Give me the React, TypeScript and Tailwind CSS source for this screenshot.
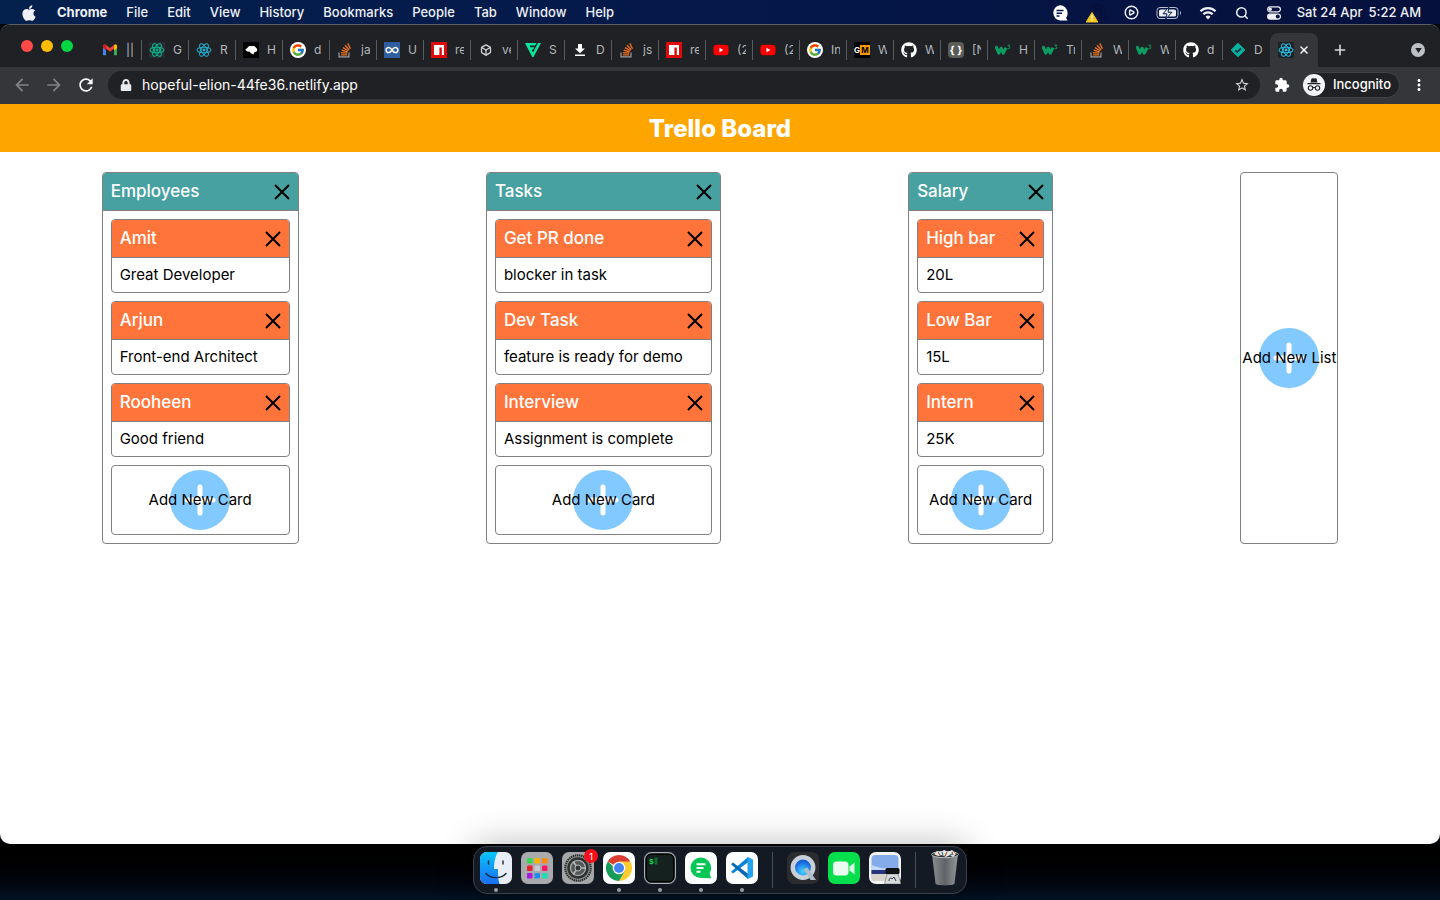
import type { ReactNode } from "react";
import { FaApple, FaGithub, FaLock, FaYoutube } from "react-icons/fa";
import { FcGoogle } from "react-icons/fc";
import { MdArrowBack, MdArrowForward, MdExtension, MdMoreVert, MdRefresh, MdStarBorder } from "react-icons/md";
import { Box, CirclePlay, Plus, Search, X } from "lucide-react";

/* ---------- favicons ---------- */

function Gmail() {
  return (
    <svg viewBox="0 0 16 16" className="size-4">
      <path d="M1 4v9.200h3V7z" fill="#4285f4" />
      <path d="M12 7v6.200h3V4z" fill="#34a853" />
      <path d="M12 4.400 15 3v3l-3 2.400z" fill="#fbbc04" />
      <path d="M1 4.200C1 2.600 2.800 2 4 3l4 3 4-3c1.200-1 3-.4 3 1.200L8 9.800z" fill="#ea4335" />
      <path d="M1 4.200C1 3 2 2.400 3 2.600L4 3.200v5L1 6z" fill="#c5221f" />
      <path d="m12 3.200 1-.6c1-.2 2 .4 2 1.600V6l-3 2.200z" fill="#fbbc04" />
    </svg>
  );
}

function ReactLogo({ color, tile }: { color: string; tile?: string }) {
  return (
    <svg viewBox="0 0 24 24" className="size-4">
      {tile && <rect width="24" height="24" rx="1.5" fill={tile} />}
      <g fill="none" stroke={color} strokeWidth="1.6">
        <ellipse cx="12" cy="12" rx="10.400" ry="4.200" />
        <ellipse cx="12" cy="12" rx="10.400" ry="4.200" transform="rotate(60 12 12)" />
        <ellipse cx="12" cy="12" rx="10.400" ry="4.200" transform="rotate(120 12 12)" />
      </g>
      <circle cx="12" cy="12" r="2.2" fill={color} />
    </svg>
  );
}

function Bird() {
  return (
    <svg viewBox="0 0 16 16" className="size-4">
      <rect width="16" height="16" fill="#000" />
      <path d="M2.300 7.400 5 5.200C5.600 4 7 3.600 8.200 4.200c2.400-.8 5 .4 6 3.200.4 1.400-.8 2.600-2.600 2.500-.6 1-1 1.700-1.200 2.600C8.600 12 7.200 11.200 6.600 9.600 4.800 9.800 3.200 9 2.300 7.400z" fill="#fff" />
    </svg>
  );
}

function GoogleDisc() {
  return (
    <span className="flex size-4 items-center justify-center rounded-full bg-white">
      <FcGoogle className="size-3.5" />
    </span>
  );
}

function Stack() {
  return (
    <svg viewBox="0 0 16 16" className="size-4" fill="none">
      <path d="M2 10.500v4.400h10v-4.400" stroke="#9aa0a6" strokeWidth="1.200" />
      <path d="M4 12.900h6.200M4.100 10.600l6.100.6M4.700 8.200l5.900 1.700M6 5.600l5.300 3.200M8 3.200l4.200 4.600M10.800 1.400l2.700 5.400" stroke="#f2711c" strokeWidth="1.300" />
    </svg>
  );
}

function Infinity8() {
  return (
    <svg viewBox="0 0 16 16" className="size-4" fill="none">
      <rect width="16" height="16" fill="#2f5f9f" />
      <path d="M8 8C7 6.400 6 5.400 4.700 5.400a2.600 2.600 0 0 0 0 5.200C6 10.600 7 9.600 8 8s2-2.600 3.300-2.600a2.600 2.600 0 0 1 0 5.200C10 10.600 9 9.600 8 8z" stroke="#fff" strokeWidth="1.500" />
    </svg>
  );
}

function Npm() {
  return (
    <svg viewBox="0 0 16 16" className="size-4">
      <rect width="16" height="16" fill="#e00a0a" />
      <path d="M3 3h10v10h-2.200V5.500H8.400V13H3z" fill="#fff" />
    </svg>
  );
}

function Flash() {
  return (
    <svg viewBox="0 0 16 16" className="size-4" fill="#0be49b">
      <path d="M0 1h11.600L10 3.600H4.600l.9 1.700h3.900L8 7.700H6.700L8 10.400 13 1h3L8.500 15H7.200z" />
    </svg>
  );
}

function DownloadGlyph() {
  return (
    <svg viewBox="0 0 16 16" className="size-4" fill="#fff">
      <path d="M6 2h4v4.500h3L8 11.300 3 6.500h3zM3 12.500h10V14H3z" />
    </svg>
  );
}

function YouTube() {
  return <FaYoutube className="size-4 text-[#ff0000] [background:linear-gradient(#fff,#fff)_center/6px_6px_no-repeat]" />;
}

function Gm() {
  return (
    <span className="flex size-4 items-center bg-black text-[8px] leading-none font-bold text-white">
      <span className="w-[6px]">G</span>
      <span className="flex h-2.5 w-2.5 items-center justify-center bg-[#ff9800] text-black">M</span>
    </span>
  );
}

function Braces() {
  return (
    <span className="flex size-4 items-center justify-center rounded-sm bg-[#5b5b58] text-[11px] leading-none font-bold text-white">
      {"{ }"}
    </span>
  );
}

function W3() {
  return (
    <svg viewBox="0 0 16 16" className="size-4" fill="none">
      <path d="M.8 4.200 3.800 11.200 6.200 6.200 8.200 11.200 11 5.800" stroke="#0a9e63" strokeWidth="3" strokeLinejoin="round" />
      <path d="M12.500 3.200h2.300l-1.100 1.400c1.600.2 1.400 2.200-.1 2.200-.6 0-1-.2-1.300-.6" stroke="#0a9e63" strokeWidth="1" />
    </svg>
  );
}

function Diamond() {
  return (
    <svg viewBox="0 0 16 16" className="size-4" fill="none">
      <path d="m8 1.200 6.800 6.800L8 14.800 1.200 8z" fill="#02b3a4" stroke="#02b3a4" strokeLinejoin="round" />
      <path d="m5.200 8 2.100 2.100L11 6.300" stroke="#10333a" strokeWidth="1.700" />
    </svg>
  );
}

const tabs: { icon: ReactNode; label: string }[] = [
  { icon: <Gmail />, label: "||" },
  { icon: <ReactLogo color="#09b58a" tile="#282c34" />, label: "G" },
  { icon: <ReactLogo color="#27a9c9" />, label: "R" },
  { icon: <Bird />, label: "H" },
  { icon: <GoogleDisc />, label: "d" },
  { icon: <Stack />, label: "ja" },
  { icon: <Infinity8 />, label: "U" },
  { icon: <Npm />, label: "re" },
  { icon: <Box className="size-3 text-[#d5d7da]" strokeWidth={2.500} />, label: "ve" },
  { icon: <Flash />, label: "S" },
  { icon: <DownloadGlyph />, label: "D" },
  { icon: <Stack />, label: "js" },
  { icon: <Npm />, label: "re" },
  { icon: <YouTube />, label: "(2" },
  { icon: <YouTube />, label: "(2" },
  { icon: <GoogleDisc />, label: "In" },
  { icon: <Gm />, label: "W" },
  { icon: <FaGithub className="size-4 text-white" />, label: "W" },
  { icon: <Braces />, label: "[N" },
  { icon: <W3 />, label: "H" },
  { icon: <W3 />, label: "Tr" },
  { icon: <Stack />, label: "W" },
  { icon: <W3 />, label: "W" },
  { icon: <FaGithub className="size-4 text-white" />, label: "d" },
  { icon: <Diamond />, label: "D" },
];

/* ---------- system menu bar ---------- */

const menus = ["File", "Edit", "View", "History", "Bookmarks", "People", "Tab", "Window", "Help"];

function MenuBar() {
  return (
    <header className="flex h-6 shrink-0 items-center justify-between bg-linear-to-r from-[#04204d] via-[#04184a] to-[#05103c] pt-px pr-[19px] pl-[20px] text-[13px] font-medium text-[#eef0f5]">
      <nav className="flex items-center gap-[19px]">
        <button aria-label="Apple menu"><FaApple className="size-[18px]" /></button>
        <button className="font-bold">Chrome</button>
        {menus.map((m) => (
          <button key={m}>{m}</button>
        ))}
      </nav>
      <div className="flex items-center">
        <svg viewBox="0 0 16 16" className="mr-[17px] size-4">
          <path d="M8 .3a7.600 7.600 0 0 1 7.600 7.600c0 2-.6 3.600-1.600 5l1.600 2.500H8A7.600 7.600 0 0 1 8 .3z" fill="#fff" />
          <path d="M4.500 5.500h7M4.500 8.200h5.500M4.500 11h3" stroke="#04184a" strokeWidth="1.500" />
        </svg>
        <svg viewBox="0 0 22 20" className="mr-[17px] h-5 w-[22px]">
          <path d="M6 13V9a7 7 0 0 1 14 0v7M10 15V9a3 3 0 0 1 6 0v8" fill="none" stroke="#06103a" strokeWidth="2" />
          <path d="m7 9.500 5.800 9.500H1.200z" fill="#f8c51c" stroke="#f8c51c" strokeLinejoin="round" />
          <path d="M7 12v3.500M7 16.500v1.300" stroke="#fff" strokeWidth="1.400" />
        </svg>
        <CirclePlay className="mr-[17px] size-[15px]" strokeWidth={2.300} />
        <svg viewBox="0 0 26 14" className="mr-[17px] h-[14px] w-[26px]" fill="none">
          <rect x="1" y="1.500" width="21" height="11" rx="3" stroke="#b9bfd0" />
          <rect x="3" y="3.500" width="17" height="7" rx="1.500" fill="#eef0f5" />
          <path d="M24 5v4c1.400-.6 1.400-3.400 0-4z" fill="#b9bfd0" />
          <path d="m13 .8-6 7h4l-1.300 5.400 6.300-7h-4z" fill="#eef0f5" stroke="#04184a" />
        </svg>
        <svg viewBox="0 0 18 14" className="mr-[18px] h-[14px] w-[18px]" fill="none" stroke="#eef0f5" strokeWidth="2.200">
          <path d="M1.500 5.300a10.600 10.600 0 0 1 15 0M4.300 8.300a6.600 6.600 0 0 1 9.400 0" />
          <path d="M9 13.500 6.500 10.800a3.600 3.600 0 0 1 5 0z" fill="#eef0f5" stroke="none" />
        </svg>
        <Search className="mr-[17px] size-[14px]" strokeWidth={2.600} />
        <svg viewBox="0 0 16 14" className="mr-[15px] h-[14px] w-4" fill="none">
          <rect x="1.600" y=".8" width="12.800" height="5" rx="2.500" stroke="#eef0f5" strokeWidth="1.200" />
          <circle cx="4.200" cy="3.300" r="1.700" fill="#eef0f5" />
          <rect x="1" y="7.500" width="14" height="6.200" rx="3.100" fill="#eef0f5" />
          <circle cx="11.800" cy="10.600" r="2" fill="#04123f" />
        </svg>
        <span className="flex gap-1.5">
          <span>Sat 24 Apr</span>
          <span>5:22 AM</span>
        </span>
      </div>
    </header>
  );
}

/* ---------- browser chrome ---------- */

function TabStrip() {
  return (
    <div className="flex h-[42px] items-end bg-[#202124]">
      <div className="flex h-[42px] w-[95px] shrink-0 items-center gap-2 pl-[21px]">
        <button aria-label="Close window" className="size-3 rounded-full bg-[#ff4a48]" />
        <button aria-label="Minimise" className="size-3 rounded-full bg-[#ffbd00]" />
        <button aria-label="Zoom" className="size-3 rounded-full bg-[#00d742]" />
      </div>
      <div className="flex h-[34px] items-center">
        {tabs.map((t, i) => (
          <button
            key={i}
            className={`flex h-5 w-[47px] items-center pl-[7px] ${i === tabs.length - 1 ? "" : "border-r border-[#5a5c60]"}`}
          >
            <span className="flex size-4 shrink-0 items-center justify-center">{t.icon}</span>
            <span className="ml-2 w-[9px] overflow-hidden text-left text-xs leading-4 whitespace-nowrap text-[#b4b7bb]">{t.label}</span>
          </button>
        ))}
        <div className="flex h-[34px] w-12 items-center gap-1 rounded-t-lg bg-[#35363a] pl-2">
          <ReactLogo color="#27b9dd" tile="#202124" />
          <button aria-label="Close tab" className="text-white"><X className="size-3" strokeWidth={3} /></button>
        </div>
      </div>
      <button aria-label="New tab" className="mb-[9px] ml-[14px] text-[#d5d7da]"><Plus className="size-4" strokeWidth={2.400} /></button>
      <button aria-label="Search tabs" className="mr-[15px] mb-[10px] ml-auto flex size-[14px] items-center justify-center rounded-full bg-[#bdc1c6]">
        <svg viewBox="0 0 8 6" className="h-[5px] w-[7px]"><path d="M0 0h8L4 6z" fill="#202124" /></svg>
      </button>
    </div>
  );
}

function Toolbar() {
  return (
    <div className="flex h-[37px] items-center bg-[#35363a] px-3 pb-[2px]">
      <button aria-label="Back" className="text-[#828387]"><MdArrowBack className="size-5" /></button>
      <button aria-label="Forward" className="ml-3 text-[#828387]"><MdArrowForward className="size-5" /></button>
      <button aria-label="Reload" className="ml-3 text-white"><MdRefresh className="size-5" /></button>
      <div className="ml-3 flex h-7 flex-1 items-center rounded-full bg-[#202124] pr-[10px] pl-3">
        <FaLock className="size-3 text-[#e8eaed]" />
        <input
          aria-label="Address"
          defaultValue="hopeful-elion-44fe36.netlify.app"
          className="ml-[10px] flex-1 bg-transparent text-sm text-white outline-none"
        />
        <button aria-label="Bookmark" className="text-[#d5d7da]"><MdStarBorder className="size-4" /></button>
      </div>
      <button aria-label="Extensions" className="ml-[14px] text-white"><MdExtension className="size-4" /></button>
      <button className="ml-3 flex h-[26px] items-center gap-2 rounded-full border border-[#414246] bg-[#202124] pr-2 text-[13px] font-medium text-white">
        <svg viewBox="0 0 22 22" className="size-[22px]">
          <circle cx="11" cy="11" r="11" fill="#f4f5f6" />
          <path d="M7.500 8.500 8.300 5c.2-.8.8-1 1.400-.8l1.300.3 1.300-.3c.6-.2 1.200 0 1.400.8l.8 3.500zM4.500 9h13v1.200h-13z" fill="#202124" />
          <g fill="none" stroke="#202124" strokeWidth="1.100">
            <circle cx="7.500" cy="14" r="2.200" />
            <circle cx="14.500" cy="14" r="2.200" />
            <path d="M9.700 13.800c.8-.5 1.800-.5 2.600 0" />
          </g>
        </svg>
        Incognito
      </button>
      <button aria-label="More" className="ml-[10px] text-white"><MdMoreVert className="size-[18px]" /></button>
    </div>
  );
}

/* ---------- board ---------- */

interface List {
  title: string;
  width: string;
  cards: { title: string; body: string }[];
}

const lists: List[] = [
  {
    title: "Employees",
    width: "w-[197px]",
    cards: [
      { title: "Amit", body: "Great Developer" },
      { title: "Arjun", body: "Front-end Architect" },
      { title: "Rooheen", body: "Good friend" },
    ],
  },
  {
    title: "Tasks",
    width: "w-[235px]",
    cards: [
      { title: "Get PR done", body: "blocker in task" },
      { title: "Dev Task", body: "feature is ready for demo" },
      { title: "Interview", body: "Assignment is complete" },
    ],
  },
  {
    title: "Salary",
    width: "w-[145px]",
    cards: [
      { title: "High bar", body: "20L" },
      { title: "Low Bar", body: "15L" },
      { title: "Intern", body: "25K" },
    ],
  },
];

function TitleRow({ title, tone }: { title: string; tone: string }) {
  return (
    <div className={`flex h-[38px] items-center justify-between border-b border-[#808080] px-2 text-[17px] font-medium text-white ${tone}`}>
      <h2 className="whitespace-nowrap">{title}</h2>
      <button aria-label={`Remove ${title}`}>
        <svg viewBox="0 0 16 16" className="size-4" stroke="#000" strokeWidth="2"><path d="m1 1 14 14M15 1 1 15" /></svg>
      </button>
    </div>
  );
}

function AddButton({ label, className }: { label: string; className: string }) {
  return (
    <button className={`grid place-items-center rounded border border-[#808080] ${className}`}>
      <svg viewBox="0 0 60 60" className="col-start-1 row-start-1 size-[60px]">
        <circle cx="30" cy="30" r="30" fill="#82c9ff" />
        <path d="M30 17v26M17 30h26" stroke="#fff" strokeWidth="5" strokeLinecap="round" />
      </svg>
      <span className="col-start-1 row-start-1 whitespace-nowrap">{label}</span>
    </button>
  );
}

function Board() {
  return (
    <main className="flex-1 bg-white text-[15px] text-black">
      <h1 className="flex h-12 items-center justify-center bg-[#ffa500] pt-[2px] text-2xl font-extrabold text-white">Trello Board</h1>
      <div className="flex justify-around px-2 pt-5">
        {lists.map((l) => (
          <section key={l.title} className={`overflow-hidden rounded border border-[#808080] ${l.width}`}>
            <TitleRow title={l.title} tone="bg-[#47a1a1]" />
            <div className="flex flex-col gap-2 p-2">
              {l.cards.map((c) => (
                <article key={c.title} className="overflow-hidden rounded border border-[#808080]">
                  <TitleRow title={c.title} tone="bg-[#ff743b]" />
                  <p className="flex h-[34px] items-center px-2 whitespace-nowrap">{c.body}</p>
                </article>
              ))}
              <AddButton label="Add New Card" className="h-[70px]" />
            </div>
          </section>
        ))}
        <AddButton label="Add New List" className="w-[98px] grid-cols-[96px]" />
      </div>
    </main>
  );
}

/* ---------- dock ---------- */

function Finder() {
  return (
    <svg viewBox="0 0 32 32" className="size-8">
      <defs>
        <linearGradient id="finder" x2="0" y2="1"><stop stopColor="#08c5fb" /><stop offset="1" stopColor="#1a6df2" /></linearGradient>
        <clipPath id="finderClip"><rect width="32" height="32" rx="7" /></clipPath>
      </defs>
      <g clipPath="url(#finderClip)">
        <rect width="32" height="32" fill="#e9eef6" />
        <path d="M0 0h18c-3 5-4 10-4 17h4c0 6 0 10 1.500 15H0z" fill="url(#finder)" />
      </g>
      <path d="M8.500 9v3M23 9v3M6 21.500c5 5.500 15 5.500 20 0" fill="none" stroke="#16283c" strokeWidth="1.400" strokeLinecap="round" />
    </svg>
  );
}

const padColors = ["#35d84f", "#ffb400", "#ff8a10", "#e8202e", "#c9ccd2", "#fb1568", "#a819e0", "#1d8df4", "#1ce0b2"];

function Launchpad() {
  return (
    <svg viewBox="0 0 32 32" className="size-8">
      <rect width="32" height="32" rx="7" fill="#a9aaad" />
      {padColors.map((c, i) => (
        <rect key={c} x={6 + (i % 3) * 7.500} y={6 + Math.floor(i / 3) * 7.500} width="5.500" height="5.500" rx="1.300" fill={c} />
      ))}
    </svg>
  );
}

function Settings() {
  return (
    <svg viewBox="0 0 32 32" className="size-8" fill="none">
      <rect width="32" height="32" rx="7" fill="#a4a7a5" />
      <circle cx="16" cy="16" r="12.800" fill="#8a8d8c" stroke="#2a2c2d" strokeWidth="2" strokeDasharray="1.400 .7" />
      <circle cx="16" cy="16" r="9.500" fill="#555858" stroke="#2e3031" strokeWidth="2.500" />
      <circle cx="16" cy="16" r="7.500" stroke="#aeb1b0" strokeWidth="1.200" />
      <path d="m16 16-5-6.500M16 16h8M16 16l-5 6.500" stroke="#b6b9b8" strokeWidth="1.600" />
      <circle cx="16" cy="16" r="3" fill="#333536" stroke="#b6b9b8" />
    </svg>
  );
}

function ChromeIcon() {
  return (
    <svg viewBox="0 0 32 32" className="size-8">
      <rect width="32" height="32" rx="7" fill="#fff" />
      <path d="M16 16 4.740 9.500A13 13 0 0 1 27.260 9.500z" fill="#dc3d31" />
      <path d="M27.260 9.500A13 13 0 0 1 16 29l5.200-10L16 9.500z" fill="#fdcb2e" />
      <path d="M4.740 9.500A13 13 0 0 0 16 29l5.600-9.700H16z" fill="#179b58" />
      <circle cx="16" cy="16" r="6.300" fill="#fff" />
      <circle cx="16" cy="16" r="5" fill="#4583f3" />
    </svg>
  );
}

function Terminal() {
  return (
    <svg viewBox="0 0 32 32" className="size-8">
      <rect x=".6" y=".6" width="30.800" height="30.800" rx="7" fill="#000" stroke="#a7b3b8" strokeWidth="1.200" />
      <rect x="3" y="3" width="26" height="26" rx="4" fill="#14211f" />
      <text x="5" y="12" fontSize="8" fontFamily="Liberation Mono, monospace" fontWeight="700" fill="#18d34b">$</text>
      <rect x="10.500" y="5.500" width="3" height="7" fill="#0b6d2a" />
    </svg>
  );
}

function Chat() {
  return (
    <svg viewBox="0 0 32 32" className="size-8">
      <rect width="32" height="32" rx="7" fill="#fff" />
      <path d="M15.800 5.500a10.300 10.300 0 0 1 10.300 10.300c0 2.600-.7 4.300-1.600 5.900l1.800 4.600-10.500-.2a10.300 10.300 0 0 1 0-20.600z" fill="#06c755" />
      <path d="M11.500 12.300h9M11.500 16h7M11.500 19.700h4" stroke="#fff" strokeWidth="2" />
    </svg>
  );
}

function Code() {
  return (
    <svg viewBox="0 0 32 32" className="size-8">
      <rect width="32" height="32" rx="7" fill="#fff" />
      <path d="M5 19.800 7 21.500 22 10.200V5z" fill="#0a84d8" />
      <path d="m5 12.200 17 14.800v-5.200L7 10.500z" fill="#0869b3" />
      <path d="m21.500 4.800 5.500 2.600v17.200l-5.500 2.600z" fill="#22a3f1" />
    </svg>
  );
}

function QuickTime() {
  return (
    <svg viewBox="0 0 32 32" className="size-8">
      <defs>
        <radialGradient id="qt" cy=".7"><stop stopColor="#42d7ff" /><stop offset="1" stopColor="#1560dc" /></radialGradient>
      </defs>
      <rect width="32" height="32" rx="7" fill="#2a2c30" />
      <circle cx="16" cy="15.500" r="10.200" fill="url(#qt)" stroke="#c7d0d9" strokeWidth="4.500" />
      <path d="m16.500 17 4-1.500 8.500 12.500h-5.500z" fill="#aebdc8" />
    </svg>
  );
}

function FaceTime() {
  return (
    <svg viewBox="0 0 32 32" className="size-8">
      <rect width="32" height="32" rx="7" fill="#06df4c" />
      <rect x="5" y="9.500" width="15.500" height="14" rx="3.500" fill="#e9fbef" />
      <path d="m21.500 14.500 5-4v12l-5-4z" fill="#d9f7e2" />
    </svg>
  );
}

function Preview() {
  return (
    <svg viewBox="0 0 32 32" className="size-8">
      <rect width="32" height="32" rx="7" fill="#f4f4f4" />
      <rect x="2.500" y="3" width="27" height="26" rx="4" fill="#84abea" />
      <path d="M2.500 13 12 16l17.500 1v3h-27z" fill="#c3d8f7" />
      <path d="M2.500 18h27v4h-27z" fill="#27357c" />
      <path d="M2.500 22h27v4a3 3 0 0 1-3 3h-21a3 3 0 0 1-3-3z" fill="#d9d4cb" />
      <path d="M18 22h11l3 10H15.500z" fill="#d7dadd" stroke="#717579" strokeWidth=".6" />
      <rect x="16.500" y="16" width="14" height="6" rx="1.500" fill="#101214" />
      <path d="M20 29c0-3 2-4 3-2l2-2 2 4" fill="none" stroke="#33373a" />
    </svg>
  );
}

function Trash() {
  return (
    <svg viewBox="0 0 30 38" className="h-[38px] w-[30px]">
      <defs>
        <linearGradient id="can"><stop stopColor="#898d8f" /><stop offset=".5" stopColor="#606466" /><stop offset="1" stopColor="#939799" /></linearGradient>
      </defs>
      <path d="M2 5h26l-3.500 29.500c-.3 2.500-18.700 2.500-19 0z" fill="url(#can)" />
      <ellipse cx="15" cy="5.500" rx="13.500" ry="3.200" fill="#303437" stroke="#b8bcbe" />
      <path d="m4 5 3-3 4 1 3-2 4 2 4-2 4 4-3 3-3-2-4 2-4-2-4 1z" fill="#e6e9ea" />
      <path d="m8 3 2 3M17 3l-2 4M22 3l1 3" stroke="#b2532e" strokeWidth="1.200" />
      <path d="m12 3 1 3M20 6l2-1" stroke="#287f99" strokeWidth="1.200" />
    </svg>
  );
}

const apps: { name: string; icon: ReactNode; running?: boolean; badge?: string }[] = [
  { name: "Finder", icon: <Finder />, running: true },
  { name: "Launchpad", icon: <Launchpad /> },
  { name: "System Preferences", icon: <Settings />, badge: "1" },
  { name: "Google Chrome", icon: <ChromeIcon />, running: true },
  { name: "Terminal", icon: <Terminal />, running: true },
  { name: "Chat", icon: <Chat />, running: true },
  { name: "Code", icon: <Code />, running: true },
];

const extras: { name: string; icon: ReactNode }[] = [
  { name: "QuickTime Player", icon: <QuickTime /> },
  { name: "FaceTime", icon: <FaceTime /> },
  { name: "Preview", icon: <Preview /> },
];

function Dock() {
  return (
    <footer className="flex shrink-0 justify-center bg-linear-to-b from-black to-[#031222] pt-[2px] pb-[6px]">
      <div className="flex h-12 items-start gap-[9px] rounded-[14px] border border-[#3b414a] bg-[#131a24] px-[6px] pt-[5px] shadow-[0_0_36px_rgba(0,0,0,0.3)]">
        {apps.map((a) => (
          <button key={a.name} aria-label={a.name} className="relative">
            {a.icon}
            {a.running && <span className="absolute -bottom-2 left-[14px] size-1 rounded-full bg-[#9a9ea5]" />}
            {a.badge && (
              <span className="absolute -top-[3px] -right-[4px] flex size-[14px] items-center justify-center rounded-full bg-[#f5101c] text-[9px] leading-none text-white">
                {a.badge}
              </span>
            )}
          </button>
        ))}
        <span className="mx-[5px] h-9 w-px bg-[#4a5059]" />
        {extras.map((a) => (
          <button key={a.name} aria-label={a.name}>{a.icon}</button>
        ))}
        <span className="mx-[5px] h-9 w-px bg-[#4a5059]" />
        <button aria-label="Bin" className="-mt-[3px]"><Trash /></button>
      </div>
    </footer>
  );
}

export default function App() {
  return (
    <div className="flex min-h-screen flex-col bg-[#02060e] font-['Inter',sans-serif]">
      <MenuBar />
      <div className="flex flex-1 flex-col overflow-hidden rounded-[10px] border-t border-[#5f6063]">
        <TabStrip />
        <Toolbar />
        <Board />
      </div>
      <Dock />
    </div>
  );
}
